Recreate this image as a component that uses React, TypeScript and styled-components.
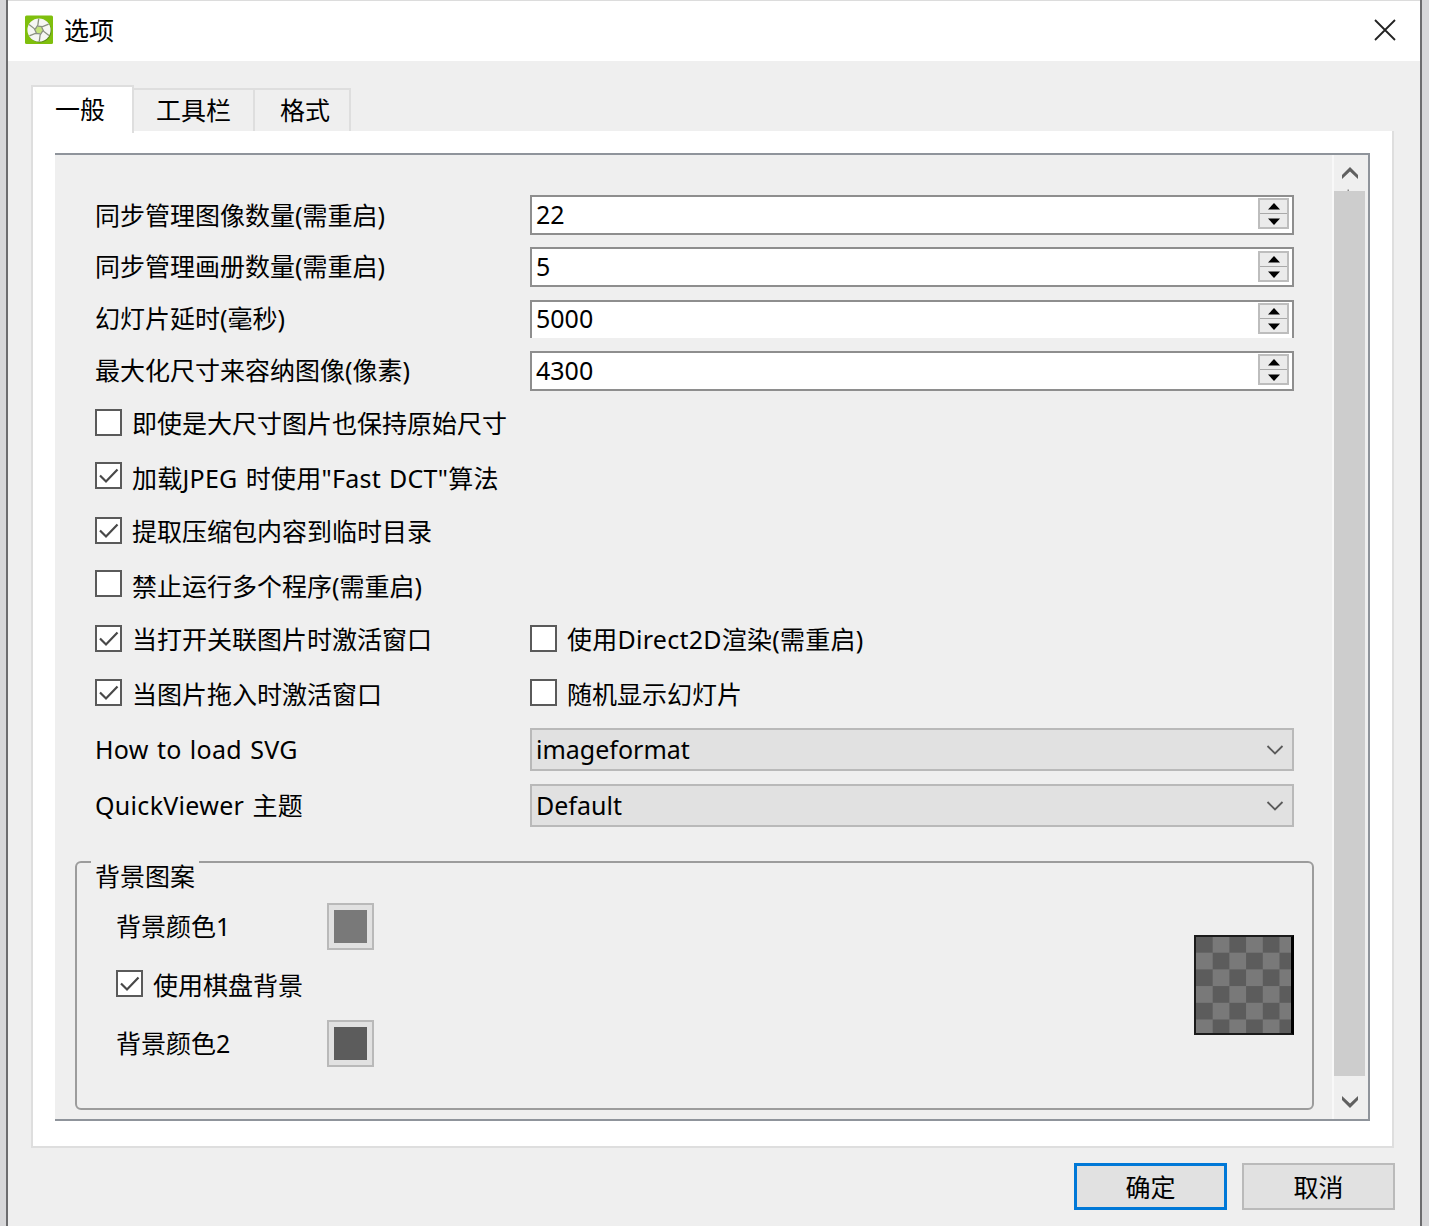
import { useState } from "react";
import styled, { createGlobalStyle } from "styled-components";

const GlobalStyle = createGlobalStyle`
  body {
    margin: 0;
    background: #d7d7d9;
    font-family: "Noto Sans", "Noto Sans CJK SC", sans-serif;
    font-size: 25px;
    color: #000;
  }
  * {
    box-sizing: border-box;
  }
`;

const Dialog = styled.div`
  width: 1416px;
  height: 1226px;
  margin-left: 6px;
  border: solid #6c6c6e;
  border-width: 0 2px;
  background: #efefef;
  overflow: hidden;
`;

const TitleBar = styled.div`
  display: flex;
  align-items: center;
  height: 61px;
  padding: 0 24px 2px 16px;
  border-top: 1px solid #dcdcdc;
  background: #fff;
`;

const TitleText = styled.span`
  flex: 1;
  margin-left: 10px;
  line-height: 30px;
`;

const TabBar = styled.div`
  display: flex;
  align-items: flex-end;
  height: 70px;
  padding-left: 23px;
`;

const Tab = styled.div<{ $active?: boolean; $width: number; $pad: number }>`
  position: relative;
  width: ${(p) => p.$width}px;
  height: ${(p) => (p.$active ? 48 : 43)}px;
  margin-bottom: ${(p) => (p.$active ? -2 : 0)}px;
  padding-left: ${(p) => p.$pad}px;
  border: 2px solid #dedede;
  border-left-width: ${(p) => (p.$active ? 2 : 0)}px;
  border-bottom: none;
  background: ${(p) => (p.$active ? "#fff" : "#efefef")};
  line-height: ${(p) => (p.$active ? 44 : 40)}px;
  cursor: pointer;
`;

const TabPage = styled.div`
  width: 1363px;
  height: 1017px;
  margin-left: 23px;
  padding: 22px 22px 0;
  border: 2px solid #dedede;
  border-top: none;
  background: #fff;
`;

const ScrollArea = styled.div`
  display: flex;
  width: 1315px;
  height: 968px;
  border: 2px solid #8f949b;
  border-left: none;
  background: #efefef;
`;

const Content = styled.div`
  flex: 1;
  padding: 40px 18px 0 20px;
`;

const ScrollBar = styled.div`
  display: flex;
  flex-direction: column;
  width: 37px;
  border-left: 2px solid #f8f8f8;
`;

const ScrollButton = styled.div<{ $height: number; $top?: number }>`
  display: flex;
  align-items: center;
  justify-content: center;
  width: 31px;
  height: ${(p) => p.$height}px;
  padding-top: ${(p) => p.$top ?? 0}px;
`;

const ScrollThumb = styled.div`
  width: 31px;
  height: 885px;
  background: #cdcdcd;
`;

const Row = styled.div<{ $height: number }>`
  display: flex;
  align-items: flex-start;
  height: ${(p) => p.$height}px;
  padding-left: 20px;
`;

const Label = styled.span<{ $line?: number; $latin?: boolean }>`
  width: 435px;
  line-height: ${(p) => p.$line ?? 39}px;
  letter-spacing: ${(p) => (p.$latin ? 0.3 : 0)}px;
  word-spacing: ${(p) => (p.$latin ? 1.4 : 0)}px;
  white-space: nowrap;
`;

const SpinBox = styled.div<{ $open?: boolean }>`
  display: flex;
  justify-content: space-between;
  width: 764px;
  height: ${(p) => (p.$open ? 38 : 40)}px;
  padding: 0 3px 0 4px;
  border: 2px solid #8e8e8e;
  border-bottom-width: ${(p) => (p.$open ? 0 : 2)}px;
  background: #fff;
  line-height: ${(p) => (p.$open ? 33 : 35)}px;
`;

const SpinButtons = styled.div<{ $top: number }>`
  width: 31px;
  height: 31px;
  margin-top: ${(p) => p.$top}px;
  border: 2px solid #bdbdbd;
  background: #ebebeb;
`;

const SpinButton = styled.div`
  display: flex;
  align-items: center;
  justify-content: center;
  height: 13px;

  & + & {
    height: 14px;
    padding-top: 1px;
    border-top: 1px solid #a9a9a9;
  }
`;

const CheckLabel = styled.div<{ $line: number; $latin?: boolean }>`
  display: flex;
  width: 435px;
  line-height: ${(p) => p.$line}px;
  letter-spacing: ${(p) => (p.$latin ? 0.25 : 0)}px;
  word-spacing: ${(p) => (p.$latin ? 1.4 : 0)}px;
  white-space: nowrap;
  cursor: pointer;
`;

const CheckSquare = styled.span`
  display: flex;
  align-items: center;
  justify-content: center;
  width: 27px;
  height: 27px;
  margin-right: 10px;
  border: 2px solid #5a5a5a;
  background: #fff;
`;

const Combo = styled.div`
  display: flex;
  align-items: center;
  justify-content: space-between;
  width: 764px;
  height: 43px;
  padding: 0 8px 0 4px;
  border: 2px solid #b9b9b9;
  background: #e1e1e1;
  line-height: 37px;
`;

const Group = styled.div`
  display: flex;
  justify-content: space-between;
  width: 1239px;
  height: 249px;
  padding: 0 18px 0 19px;
  border: 2px solid #9c9c9c;
  border-radius: 6px;
`;

const GroupColumn = styled.div`
  display: flex;
  flex-direction: column;
`;

// sits over the frame line and masks it behind the caption
const GroupCaption = styled.div`
  width: 108px;
  height: 42px;
  margin: -2px 0 0 -5px;
  padding-left: 4px;
  background: #efefef;
  line-height: 31px;
  white-space: nowrap;
`;

const ColorRow = styled.div<{ $height: number }>`
  display: flex;
  align-items: flex-start;
  height: ${(p) => p.$height}px;
  padding-left: 20px;
`;

const ColorName = styled.span`
  width: 211px;
  line-height: 47px;
`;

const ColorButton = styled.div<{ $color: string }>`
  width: 47px;
  height: 47px;
  padding: 5px;
  border: 2px solid #b9b9b9;
  background: #e1e1e1;

  &::after {
    content: "";
    display: block;
    width: 33px;
    height: 33px;
    background: ${(p) => p.$color};
  }
`;

const Preview = styled.div`
  width: 100px;
  height: 100px;
  margin-top: 72px;
  border: 2px solid #1b1b1b;
  border-right: 3px solid #000;
  background: conic-gradient(#797979 25%, #5c5c5c 0 50%, #797979 0 75%, #5c5c5c 0) 0 -1px / 33.4px 33.4px;
`;

const Footer = styled.div`
  display: flex;
  justify-content: flex-end;
  gap: 15px;
  padding: 15px 25px 0 0;
`;

const Button = styled.div<{ $primary?: boolean }>`
  width: 153px;
  height: 47px;
  border: ${(p) => (p.$primary ? "3px solid #0078d7" : "2px solid #bababa")};
  background: #e1e1e1;
  line-height: ${(p) => (p.$primary ? 42 : 44)}px;
  text-align: center;
  cursor: pointer;
`;

const AppIcon = () => (
  <svg width="30" height="30" viewBox="0 0 30 30">
    <rect x="1" y="0.5" width="28" height="28.5" rx="1.5" fill="#7fbf0d" />
    <circle cx="15.8" cy="15.8" r="11.6" fill="#5c8a18" />
    <circle cx="15" cy="15" r="11.6" fill="#f6f6f3" />
    <path d="M13 11.5H17L19 15L17 18.5H13L11 15Z" fill="#c3e37a" />
    <g stroke="#8a9180" strokeWidth="1.3" fill="none">
      {[10, 70, 130, 190, 250, 310].map((a) => (
        <path key={a} d="M13 11.5L18 11L23.5 7.5" transform={`rotate(${a} 15 15)`} />
      ))}
    </g>
  </svg>
);

const CloseIcon = () => (
  <svg width="22" height="22" viewBox="0 0 22 22" stroke="#222" strokeWidth="1.8">
    <path d="M1 1L21 21M21 1L1 21" />
  </svg>
);

const Triangle = ({ down }: { down?: boolean }) => (
  <svg width="12" height="7" viewBox="0 0 12 7">
    <path d={down ? "M0 0.5H12L6 7Z" : "M0 6.5H12L6 0Z"} fill="#000" />
  </svg>
);

const ScrollArrow = ({ down }: { down?: boolean }) => (
  <svg width="16" height="12" viewBox="0 0 16 12" fill="#606060" overflow="visible">
    <path d={down ? "M0 0L8 7.5L16 0V4L8 12L0 4Z" : "M0 12L8 4.5L16 12V8L8 0L0 8Z"} />
    {!down && <rect x="5.5" y="22.5" width="1.5" height="1.5" fill="#8a8a8a" />}
  </svg>
);

const ComboArrow = () => (
  <svg width="18" height="10" viewBox="0 0 18 10" fill="none" stroke="#5a5a5a" strokeWidth="1.8">
    <path d="M1.5 1L9 8.5L16.5 1" />
  </svg>
);

type CheckProps = { text: string; checked?: boolean; line?: number; latin?: boolean };

const Check = ({ text, checked, line = 29, latin }: CheckProps) => {
  const [on, setOn] = useState(!!checked);
  return (
    <CheckLabel $line={line} $latin={latin} onClick={() => setOn(!on)}>
      <CheckSquare>
        {on && (
          <svg width="20" height="16" viewBox="0 0 20 16" fill="none" stroke="#484848" strokeWidth="2.2">
            <path d="M1 7.5L7 13.5L18.5 1.5" />
          </svg>
        )}
      </CheckSquare>
      {text}
    </CheckLabel>
  );
};

const spins = [
  { label: "同步管理图像数量(需重启)", value: "22", height: 52, top: 1, line: 41 },
  { label: "同步管理画册数量(需重启)", value: "5", height: 53, top: 2 },
  { label: "幻灯片延时(毫秒)", value: "5000", height: 51, top: 1, line: 37, open: true },
  { label: "最大化尺寸来容纳图像(像素)", value: "4300", height: 58, top: 1 },
];

const tabs = [
  { name: "一般", width: 103, pad: 22 },
  { name: "工具栏", width: 121, pad: 22 },
  { name: "格式", width: 96, pad: 25 },
];

const App = () => {
  const [tab, setTab] = useState(0);

  return (
    <>
      <GlobalStyle />
      <Dialog>
        <TitleBar>
          <AppIcon />
          <TitleText>选项</TitleText>
          <CloseIcon />
        </TitleBar>
        <TabBar>
          {tabs.map((t, i) => (
            <Tab key={t.name} $width={t.width} $pad={t.pad} $active={i === tab} onClick={() => setTab(i)}>
              {t.name}
            </Tab>
          ))}
        </TabBar>
        <TabPage>
          <ScrollArea>
            <Content>
              {spins.map((s) => (
                <Row key={s.label} $height={s.height}>
                  <Label $line={s.line}>{s.label}</Label>
                  <SpinBox $open={s.open}>
                    {s.value}
                    <SpinButtons $top={s.top}>
                      <SpinButton><Triangle /></SpinButton>
                      <SpinButton><Triangle down /></SpinButton>
                    </SpinButtons>
                  </SpinBox>
                </Row>
              ))}
              <Row $height={53}><Check text="即使是大尺寸图片也保持原始尺寸" /></Row>
              <Row $height={55}><Check text={'加载JPEG 时使用"Fast DCT"算法'} line={33} latin checked /></Row>
              <Row $height={53}><Check text="提取压缩包内容到临时目录" checked /></Row>
              <Row $height={55}><Check text="禁止运行多个程序(需重启)" line={32} /></Row>
              <Row $height={54}>
                <Check text="当打开关联图片时激活窗口" checked />
                <Check text="使用Direct2D渲染(需重启)" latin />
              </Row>
              <Row $height={49}>
                <Check text="当图片拖入时激活窗口" line={31} checked />
                <Check text="随机显示幻灯片" line={31} />
              </Row>
              <Row $height={56}>
                <Label $line={43} $latin>How to load SVG</Label>
                <Combo>imageformat<ComboArrow /></Combo>
              </Row>
              <Row $height={77}>
                <Label $line={43} $latin>QuickViewer 主题</Label>
                <Combo>Default<ComboArrow /></Combo>
              </Row>
              <Group>
                <GroupColumn>
                  <GroupCaption>背景图案</GroupCaption>
                  <ColorRow $height={67}>
                    <ColorName>背景颜色1</ColorName>
                    <ColorButton $color="#797979" />
                  </ColorRow>
                  <ColorRow $height={50}><Check text="使用棋盘背景" line={31} checked /></ColorRow>
                  <ColorRow $height={47}>
                    <ColorName>背景颜色2</ColorName>
                    <ColorButton $color="#5c5c5c" />
                  </ColorRow>
                </GroupColumn>
                <Preview />
              </Group>
            </Content>
            <ScrollBar>
              <ScrollButton $height={36}><ScrollArrow /></ScrollButton>
              <ScrollThumb />
              <ScrollButton $height={43} $top={8}><ScrollArrow down /></ScrollButton>
            </ScrollBar>
          </ScrollArea>
        </TabPage>
        <Footer>
          <Button $primary>确定</Button>
          <Button>取消</Button>
        </Footer>
      </Dialog>
    </>
  );
};

export default App;
